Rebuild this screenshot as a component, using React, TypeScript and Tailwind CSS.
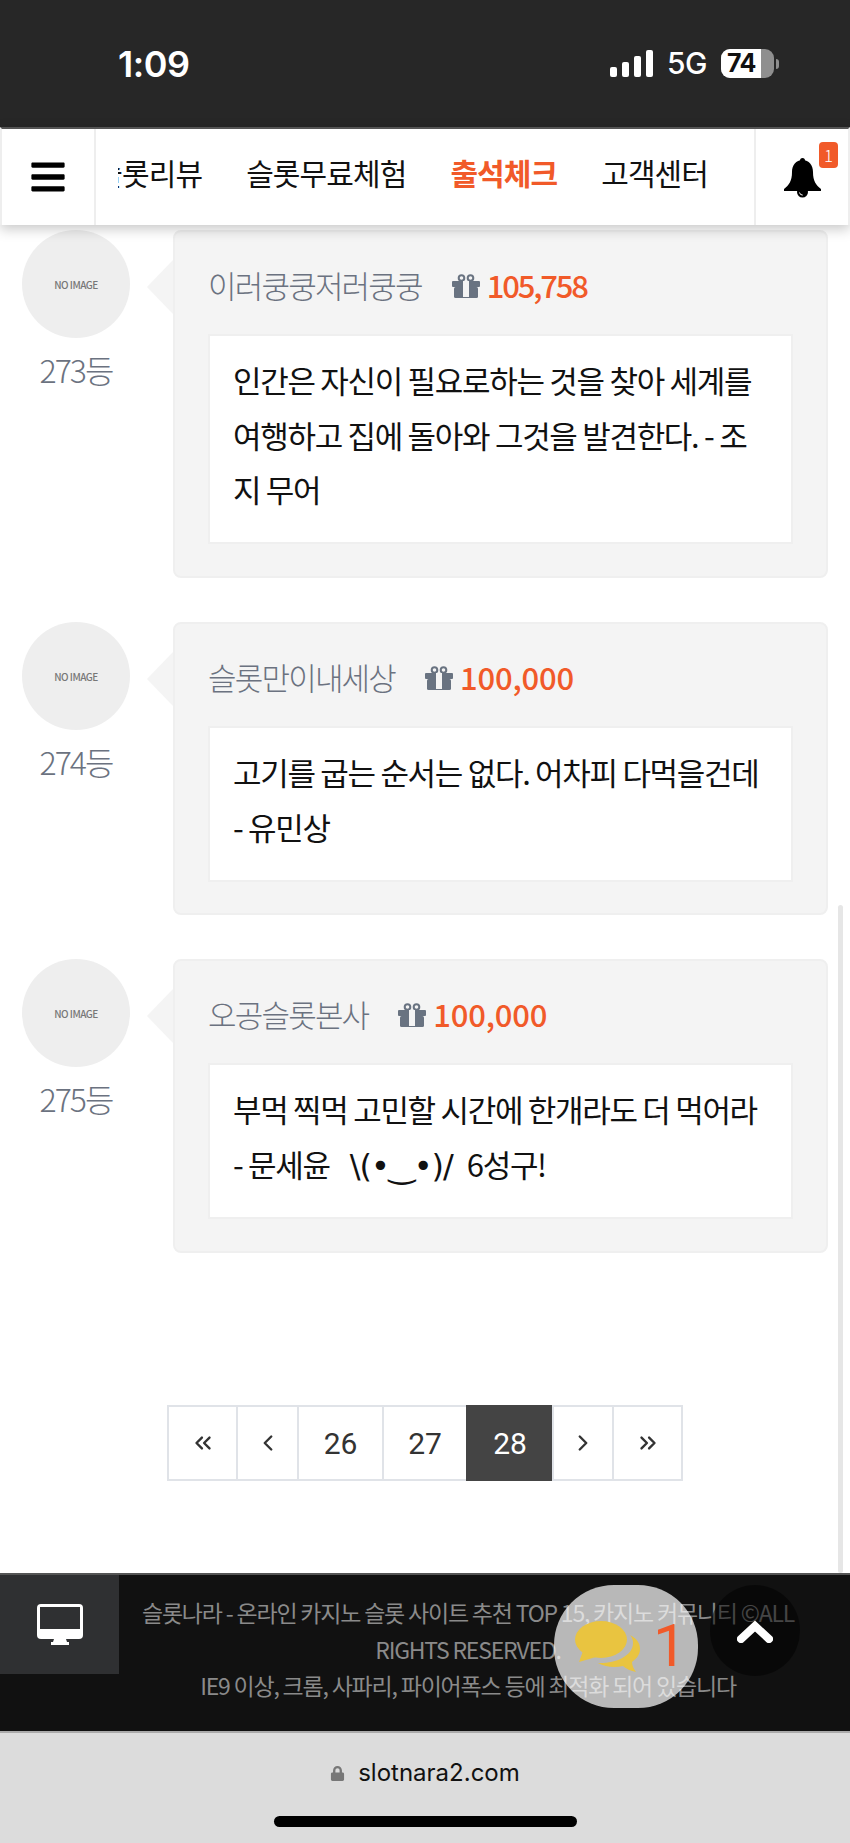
import React from "react";
import { ChevronLeft, ChevronRight, ChevronsLeft, ChevronsRight } from "lucide-react";
import { FaBars, FaLock } from "react-icons/fa";

const kr = "font-['Noto_Sans_CJK_KR','Noto_Sans',sans-serif]";

function Gift() {
  return (
    <svg width="28" height="24" viewBox="0 0 28 24" className="ml-[30px] mt-[1px] shrink-0">
      <circle cx="9.5" cy="4" r="2.8" fill="none" stroke="#697381" strokeWidth="2" />
      <circle cx="18.5" cy="4" r="2.8" fill="none" stroke="#697381" strokeWidth="2" />
      <rect x="0" y="7" width="28" height="6" rx="1" fill="#697381" />
      <rect x="2" y="13" width="24" height="11" rx="1.5" fill="#697381" />
      <rect x="11" y="7" width="6" height="16" fill="#f4f4f4" />
    </svg>
  );
}

function Card({ name, point, pointTrack, rank, lines, bodyH, cardH, gap }: { name: string; point: string; pointTrack: string; rank: string; lines: React.ReactNode[]; bodyH: string; cardH: string; gap: string }) {
  return (
    <div className={`flex ${cardH} ${gap} pl-[22px]`}>
      <div className="w-[108px] shrink-0 flex flex-col items-center">
        <div className="w-[108px] h-[108px] rounded-full bg-[#eeeeee] flex items-center justify-center text-[10px] font-medium text-[#777] tracking-[-0.5px]">NO IMAGE</div>
        <div className="mt-[9px] text-[32px] leading-[44px] font-light tracking-[-2px] text-[#6b7280]">{rank}</div>
      </div>
      <div className="relative ml-[43px] w-[655px] h-full rounded-[8px] bg-[#f4f4f4] border-2 border-[#efefef] px-[33px] pt-[28px]">
        <div className="absolute left-[-28px] top-[28px] w-0 h-0 border-y-[27px] border-y-transparent border-r-[26px] border-r-[#f4f4f4]" />
        <div className="flex items-center h-[50px]">
          <span className="text-[31px] font-light tracking-[-1.8px] text-[#6b7280]">{name}</span>
          <Gift />
          <span className={`ml-[7px] text-[31px] font-medium ${pointTrack} text-[#f15a29]`}>{point}</span>
        </div>
        <div className={`mt-[24px] ${bodyH} w-[585px] bg-white border-2 border-[#efefef] px-[23px] py-[17px] text-[31px] leading-[54.5px] tracking-[-1.3px] text-[#111]`}>
          {lines.map((l, i) => (
            <div key={i} className="whitespace-pre">{l}</div>
          ))}
        </div>
      </div>
    </div>
  );
}

function PageBtn({ w, active, children }: { w: string; active?: boolean; children: React.ReactNode }) {
  return (
    <div className={`${w} -ml-[2px] first:ml-0 h-full flex items-center justify-center border-2 font-['Roboto',sans-serif] text-[30px] ${active ? "bg-[#444444] border-[#444444] text-white" : "bg-white border-[#e0e3e8] text-[#333]"}`}>
      {children}
    </div>
  );
}

export default function App() {
  return (
    <div className={`relative w-[850px] h-[1843px] bg-white overflow-hidden ${kr}`}>
      {/* status bar */}
      <div className="h-[127px] bg-[#272727] flex items-center pl-[118px] pr-[71px] font-['Inter',sans-serif] text-white">
        <span className="text-[36px] font-semibold tracking-[-0.5px]">1:09</span>
        <div className="ml-auto flex items-end gap-[5px] h-[27px] mr-[14px]">
          <div className="w-[7px] h-[10px] rounded-[2px] bg-white" />
          <div className="w-[7px] h-[15px] rounded-[2px] bg-white" />
          <div className="w-[7px] h-[21px] rounded-[2px] bg-white" />
          <div className="w-[7px] h-[27px] rounded-[2px] bg-white" />
        </div>
        <span className="text-[30px] font-medium tracking-[-0.5px] mr-[14px]">5G</span>
        <div className="relative w-[53px] h-[29px] rounded-[9px] bg-[#8f8f8f] overflow-hidden">
          <div className="w-[40px] h-full bg-white" />
          <div className="absolute inset-0 flex items-center pl-[6px] text-[#111] text-[25px] font-bold tracking-[-0.5px]">74</div>
        </div>
        <div className="ml-[2px] w-[3px] h-[10px] rounded-r-full bg-[#8f8f8f]" />
      </div>

      {/* nav */}
      <div className="relative z-10 h-[98px] flex bg-white border-x-2 border-[#eeeeee] border-t-2 border-t-[#555] shadow-[0_4px_12px_rgba(0,0,0,0.22)]">
        <div className="w-[94px] flex items-center justify-center border-r-2 border-[#eeeeee]">
          <FaBars className="text-[38px] text-black" />
        </div>
        <div className="w-[658px] px-[22px]">
          <div className="h-full overflow-hidden">
            <div className="h-full flex items-center justify-end gap-[44px] pr-[24px] pb-[10px] text-[30px] tracking-[-0.9px] text-[#111] whitespace-nowrap">
              <span className="shrink-0">슬롯리뷰</span>
              <span className="shrink-0">슬롯무료체험</span>
              <span className="shrink-0 font-bold text-[#f15a29]">출석체크</span>
              <span className="shrink-0">고객센터</span>
            </div>
          </div>
        </div>
        <div className="relative flex-1 flex items-center justify-center border-l-2 border-[#eeeeee]">
          <svg width="37" height="40" viewBox="0 0 37 40" className="mt-[1px]">
            <circle cx="18.5" cy="2.5" r="2.5" fill="#000" />
            <path d="M18.5 2C25 2 29 7 29 14C29 23 32 27 37 31V33H0V31C5 27 8 23 8 14C8 7 12 2 18.5 2Z" fill="#000" />
            <circle cx="18.5" cy="34" r="5.5" fill="#000" />
            <path d="M15.5 34.5a3.2 3.2 0 0 0 3.2 2.6" fill="none" stroke="#fff" strokeWidth="1" />
          </svg>
          <span className="absolute right-[10px] top-[13px] w-[19px] h-[26px] rounded-[4px] bg-[#f15a29] text-white text-[17px] font-light flex items-center justify-center">1</span>
        </div>
      </div>

      {/* list */}
      <div className="pt-[5px]">
        <Card name="이러쿵쿵저러쿵쿵" point="105,758" pointTrack="tracking-[-2.2px]" rank="273등" cardH="h-[348px]" gap="mb-[44px]" bodyH="h-[210px]" lines={["인간은 자신이 필요로하는 것을 찾아 세계를", "여행하고 집에 돌아와 그것을 발견한다. - 조", "지 무어"]} />
        <Card name="슬롯만이내세상" point="100,000" pointTrack="tracking-[-0.2px]" rank="274등" cardH="h-[293px]" gap="mb-[44px]" bodyH="h-[156px]" lines={["고기를 굽는 순서는 없다. 어차피 다먹을건데", "- 유민상"]} />
        <Card
          name="오공슬롯본사"
          point="100,000"
          pointTrack="tracking-[-0.2px]"
          rank="275등"
          cardH="h-[294px]"
          gap=""
          bodyH="h-[156px]"
          lines={[
            "부먹 찍먹 고민할 시간에 한개라도 더 먹어라",
            <>
              - 문세윤
              <span className="ml-[20px] mr-[14px] font-['DejaVu_Sans',sans-serif] text-[32px] tracking-[-1px]">\(•‿•)/</span>
              6성구!
            </>,
          ]}
        />
      </div>

      {/* pagination */}
      <div className="mt-[152px] flex justify-center h-[76px]">
        <div className="flex h-full">
          <PageBtn w="w-[71px]"><ChevronsLeft size={26} strokeWidth={2.2} /></PageBtn>
          <PageBtn w="w-[63px]"><ChevronLeft size={26} strokeWidth={2.2} /></PageBtn>
          <PageBtn w="w-[87px]">26</PageBtn>
          <PageBtn w="w-[86px]">27</PageBtn>
          <PageBtn w="w-[88px]" active>28</PageBtn>
          <PageBtn w="w-[62px]"><ChevronRight size={26} strokeWidth={2.2} /></PageBtn>
          <PageBtn w="w-[71px]"><ChevronsRight size={26} strokeWidth={2.2} /></PageBtn>
        </div>
      </div>

      {/* footer */}
      <div className="mt-[92px] h-[158px] bg-[#111111] border-t-2 border-[#555] flex items-start">
        <div className="w-[119px] h-[99px] shrink-0 bg-[#2f3032] flex items-center justify-center">
          <svg width="46" height="41" viewBox="0 0 46 41">
            <rect x="0" y="0" width="46" height="35" rx="4" fill="#fff" />
            <rect x="3" y="3" width="40" height="22" fill="#2f3032" />
            <path d="M17 35H29L30 38H32V41H14V38H16Z" fill="#fff" />
          </svg>
        </div>
        <div className="w-[698px] pt-[19px] text-center text-[23px] leading-[36.5px] tracking-[-1.2px] text-[#8a8a8a]">
          <div>슬롯나라 - 온라인 카지노 슬롯 사이트 추천 TOP 15, 카지노 커뮤니티 ©ALL</div>
          <div>RIGHTS RESERVED.</div>
          <div>IE9 이상, 크롬, 사파리, 파이어폭스 등에 최적화 되어 있습니다</div>
        </div>
      </div>

      {/* browser bar */}
      <div className="h-[112px] bg-[#dcdcdc] border-t-2 border-[#aaa] flex flex-col items-center">
        <div className="mt-[24px] flex items-center gap-[13px] font-['Inter',sans-serif] text-[24px] text-[#111] h-[32px]">
          <FaLock className="text-[15px] text-[#777]" />
          <span>slotnara2.com</span>
        </div>
        <div className="mt-[27px] w-[303px] h-[11px] rounded-full bg-black" />
      </div>

      {/* overlays */}
      <div className="absolute left-[838px] top-[905px] w-[5px] h-[668px] bg-[#e6e6e6] rounded-full" />
      <div className="absolute left-[554px] top-[1585px] w-[144px] h-[123px] rounded-[60px] bg-white/70 flex items-start">
        <svg width="65" height="52" viewBox="0 0 65 52" className="ml-[21px] mt-[36px] shrink-0">
          <ellipse cx="26" cy="18.5" rx="26" ry="18.5" fill="#e9c440" />
          <path d="M8 30L4 41L21 36Z" fill="#e9c440" />
          <path d="M55 14C62 18 65 22 65 28C65 34 61 38 57 41C57 45 59 48 61 51C56 50 51 48 48 45C40 47 30 46 23 42C38 43 58 36 58 22C58 19 57 16 55 14Z" fill="#e9c440" />
        </svg>
        <span className="ml-[13px] mt-[26px] font-['Roboto',sans-serif] text-[60px] leading-[70px] text-[#f15a29]">1</span>
      </div>
      <div className="absolute left-[710px] top-[1585px] w-[90px] h-[91px] rounded-full bg-black/50 flex items-center justify-center">
        <svg width="36" height="24" viewBox="0 0 36 24">
          <polyline points="4,20 18,7 32,20" fill="none" stroke="#fff" strokeWidth="8" strokeLinecap="round" strokeLinejoin="miter" />
        </svg>
      </div>
    </div>
  );
}
